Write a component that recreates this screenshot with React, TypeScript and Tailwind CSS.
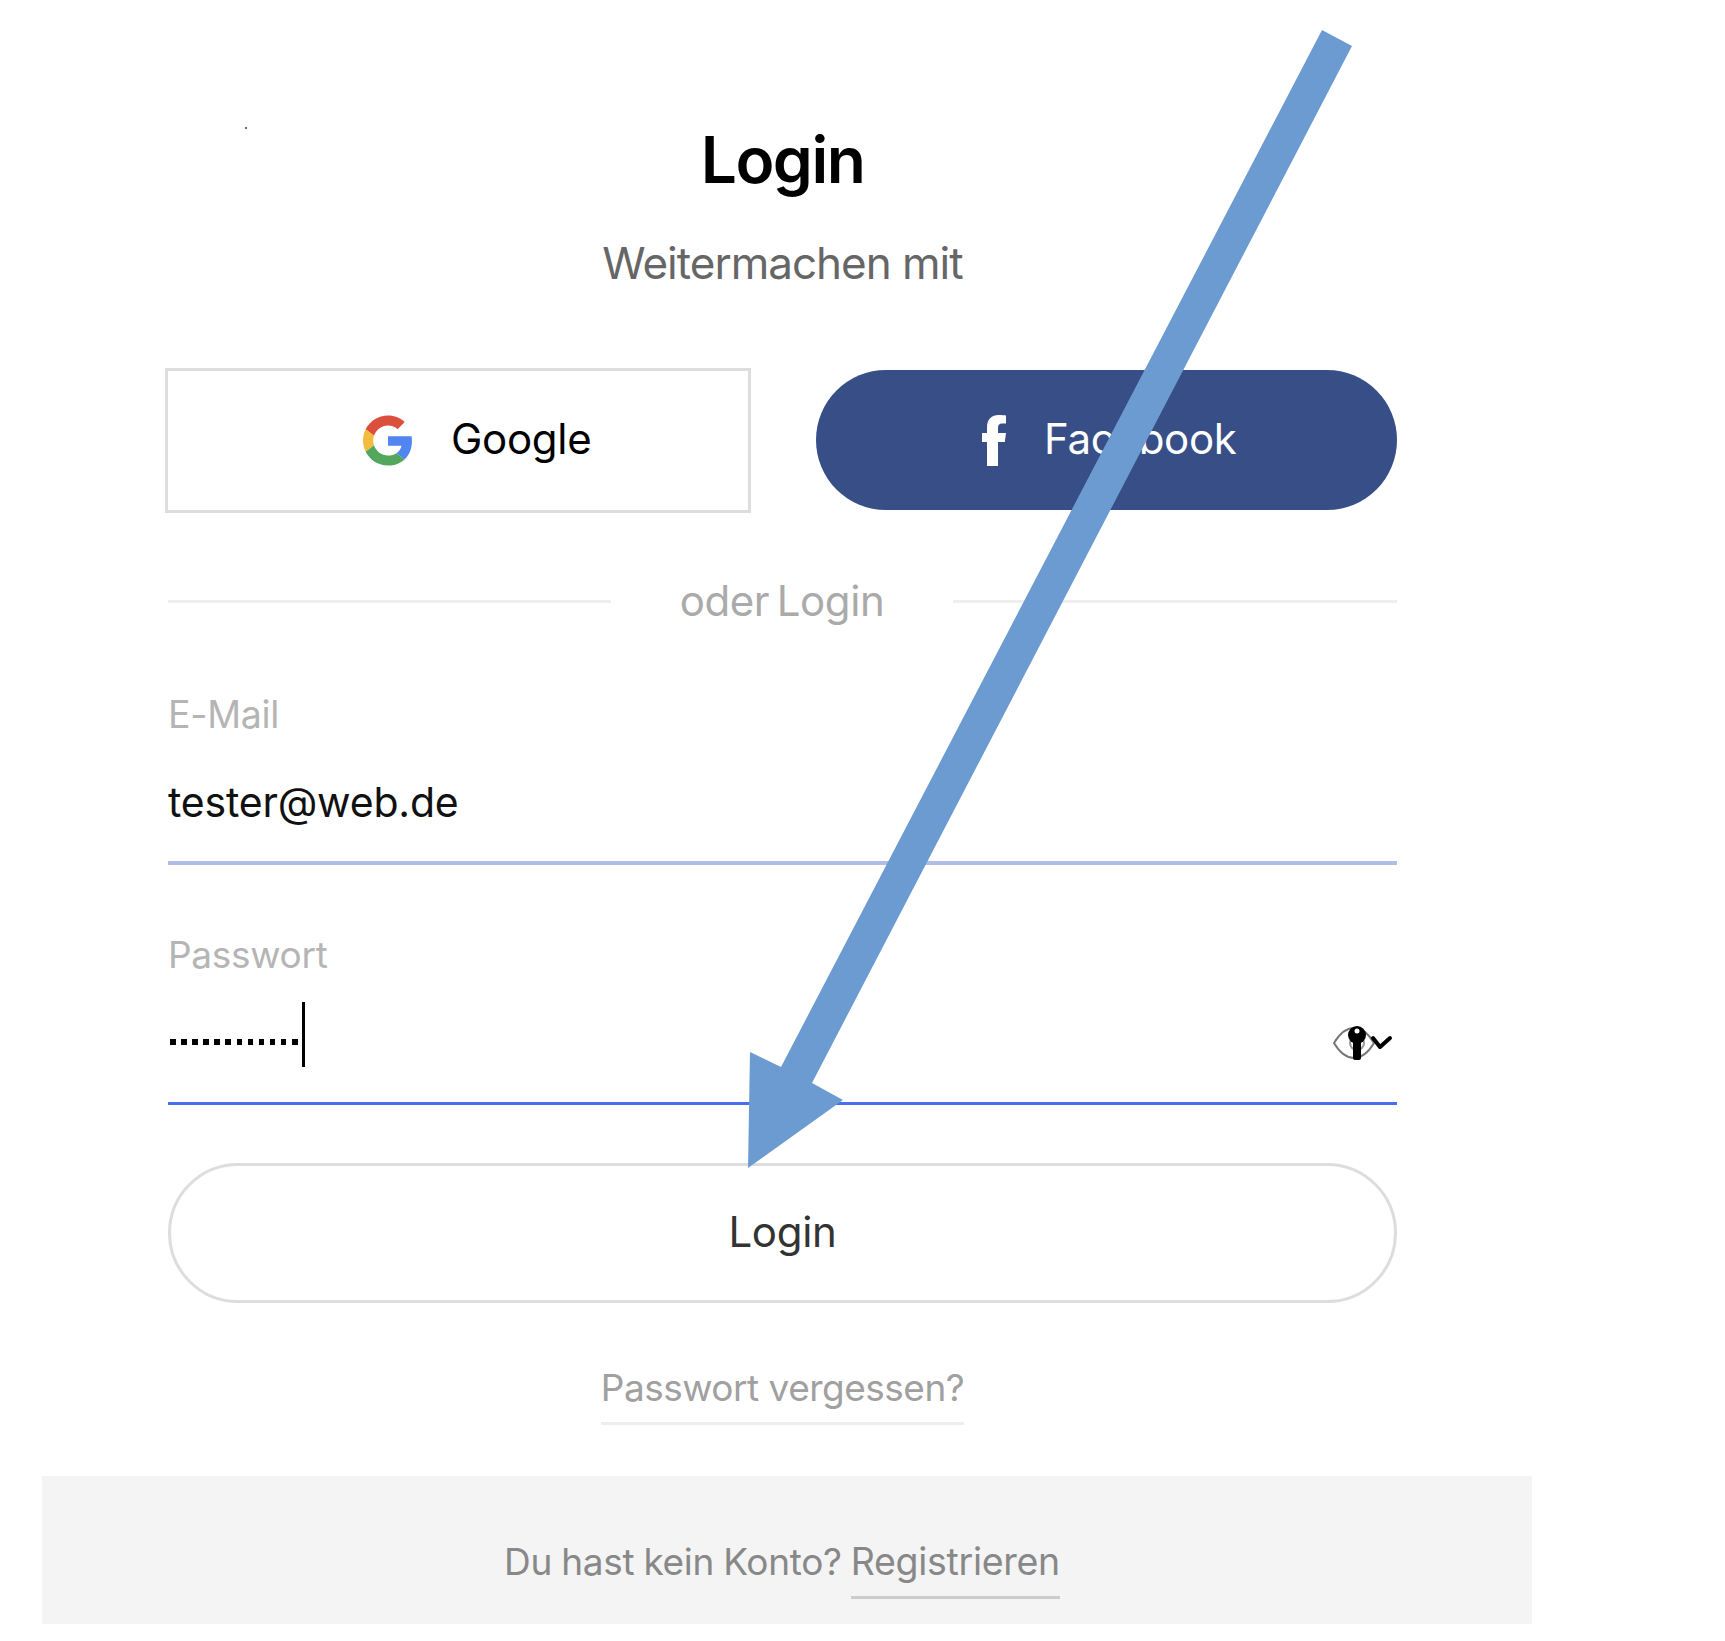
function GoogleIcon() {
  return (
    <svg viewBox="0 0 48 48" className="h-[51px] w-[50px]">
      <path fill="#DB4F3D" d="M24 9.500c3.540 0 6.710 1.220 9.210 3.600l6.850-6.850C35.900 2.380 30.470 0 24 0 14.620 0 6.510 5.380 2.560 13.220l7.980 6.190C12.430 13.720 17.740 9.500 24 9.500z" />
      <path fill="#5185F0" d="M46.980 24.550c0-1.570-.15-3.090-.38-4.550H24v9.020h12.940c-.58 2.960-2.260 5.480-4.780 7.180l7.730 6c4.510-4.180 7.090-10.360 7.090-17.650z" />
      <path fill="#F2BD3F" d="M10.530 28.590c-.48-1.450-.76-2.990-.76-4.590s.27-3.140.76-4.590l-7.980-6.190C.92 16.460 0 20.120 0 24c0 3.880.92 7.540 2.560 10.780l7.970-6.190z" />
      <path fill="#52A75C" d="M24 48c6.480 0 11.930-2.130 15.890-5.810l-7.730-6c-2.150 1.450-4.920 2.300-8.160 2.300-6.260 0-11.570-4.220-13.470-9.910l-7.980 6.190C6.510 42.620 14.620 48 24 48z" />
    </svg>
  );
}

function FacebookIcon() {
  return (
    <svg viewBox="0 0 24 51" className="h-[51px] w-[24px]" fill="#fff">
      <path d="M5 51V27H0v-9h5v-6C5 4 10 0 16.500 0c3 0 6 .3 7.500.5v8h-4C17 8.500 16 10 16 13v5h8l-1.200 9H16v24z" />
    </svg>
  );
}

function EyeKeyIcon() {
  return (
    <svg viewBox="0 0 60 36" className="h-[36px] w-[60px]">
      <path d="M1 18C7 8 13 3 21 3s14 5 20 15c-6 10-12 15-20 15S7 28 1 18z" fill="none" stroke="#777" strokeWidth="2" />
      <circle cx="24" cy="18" r="7" fill="none" stroke="#999" strokeWidth="2" />
      <circle cx="24" cy="10" r="9" fill="#000" />
      <circle cx="24" cy="6" r="2.500" fill="#fff" />
      <rect x="20" y="14" width="8" height="21" rx="2" fill="#000" />
      <path d="M40 13l7 9 10-9" fill="none" stroke="#000" strokeWidth="4" strokeLinecap="round" strokeLinejoin="round" />
    </svg>
  );
}

export default function App() {
  const dots = Array.from({ length: 12 });

  return (
    <div className="relative h-[1641px] overflow-hidden bg-white font-['Inter',sans-serif]">
      <div className="absolute left-[245px] top-[127px] h-[2px] w-[2px] rounded-full bg-gray-700" />

      <div className="ml-[42px] w-[1490px]">
        <div className="pl-[126px] pr-[135px]">
          <h1 className="pt-[120px] text-center text-[64px] leading-[80px] font-semibold tracking-[-1.5px] text-black">
            Login
          </h1>
          <p className="mt-[40px] text-center text-[44px] leading-[46px] tracking-[-1px] text-[#666]">
            Weitermachen mit
          </p>

          <div className="-ml-[3px] mt-[82px] flex items-start justify-between">
            <button className="flex h-[145px] w-[586px] items-center gap-[38px] border-[3px] border-[#ddd] pl-[195px] text-[42px] tracking-[-0.3px] text-black">
              <GoogleIcon />
              <span className="-mt-[4px]">Google</span>
            </button>
            <button className="mt-[2px] flex h-[140px] w-[581px] items-center gap-[38px] rounded-full bg-[#374e87] pl-[166px] text-[42px] tracking-[-0.3px] text-white">
              <FacebookIcon />
              <span className="-mt-[4px]">Facebook</span>
            </button>
          </div>

          <div className="mt-[65px] flex items-center justify-between">
            <div className="h-[3px] w-[443px] bg-[#eee]" />
            <span className="text-[42px] leading-[46px] tracking-[-0.4px] text-[#aaa] [word-spacing:-4px]">oder Login</span>
            <div className="h-[3px] w-[444px] bg-[#eee]" />
          </div>

          <label className="mt-[69px] block text-[37.500px] leading-[44px] tracking-[-0.3px] text-[#b5b5b5]">E-Mail</label>
          <div className="mt-[42px] border-b-[4px] border-[#b0bde6] pb-[36px] text-[41px] leading-[46px] tracking-[-0.2px] text-[#111]">
            tester@web.de
          </div>

          <label className="mt-[68px] block text-[37px] leading-[44px] tracking-[-0.3px] text-[#b5b5b5]">Passwort</label>
          <div className="mt-[23px] flex h-[105px] items-start justify-between border-b-[3px] border-[#4a6cf0]">
            <div className="flex items-start pl-[2px] pt-[2px]">
              <div className="mt-[37px] flex gap-[5.600px]">
                {dots.map((_, i) => (
                  <span key={i} className="h-[5.500px] w-[5.500px] bg-black" />
                ))}
              </div>
              <span className="ml-[4px] h-[65px] w-[3px] bg-black" />
            </div>
            <div className="pr-[4px] pt-[25px]">
              <EyeKeyIcon />
            </div>
          </div>

          <button className="mt-[58px] h-[140px] w-full rounded-full border-[3px] border-[#ddd] pb-[4px] text-[42px] tracking-[-0.3px] text-[#333]">
            Login
          </button>

          <div className="mt-[63px] text-center">
            <a className="inline-block border-b-[3px] border-[#eee] pb-[12px] text-[37px] leading-[44px] tracking-[-0.5px] text-[#a0a0a0]">
              Passwort vergessen?
            </a>
          </div>
        </div>

        <div className="mt-[51px] flex h-[148px] justify-center bg-[#f4f4f4] pt-[64px]">
          <div className="-translate-x-[5px] text-[37px] leading-[44px] tracking-[-0.3px] text-[#888] [word-spacing:-1px]">
            Du hast kein Konto?{" "}
            <a className="inline-block border-b-[3px] border-[#ccc] pb-[12px] text-[37.500px]">Registrieren</a>
          </div>
        </div>
      </div>

      {/* annotation arrow on top of the form */}
      <svg className="pointer-events-none absolute left-0 top-0" width="1725" height="1641">
        <polygon
          points="1322,30 1352,46 812,1083 843,1100 748,1168 750,1052 781,1067"
          fill="#6b9bd1"
        />
      </svg>
    </div>
  );
}
